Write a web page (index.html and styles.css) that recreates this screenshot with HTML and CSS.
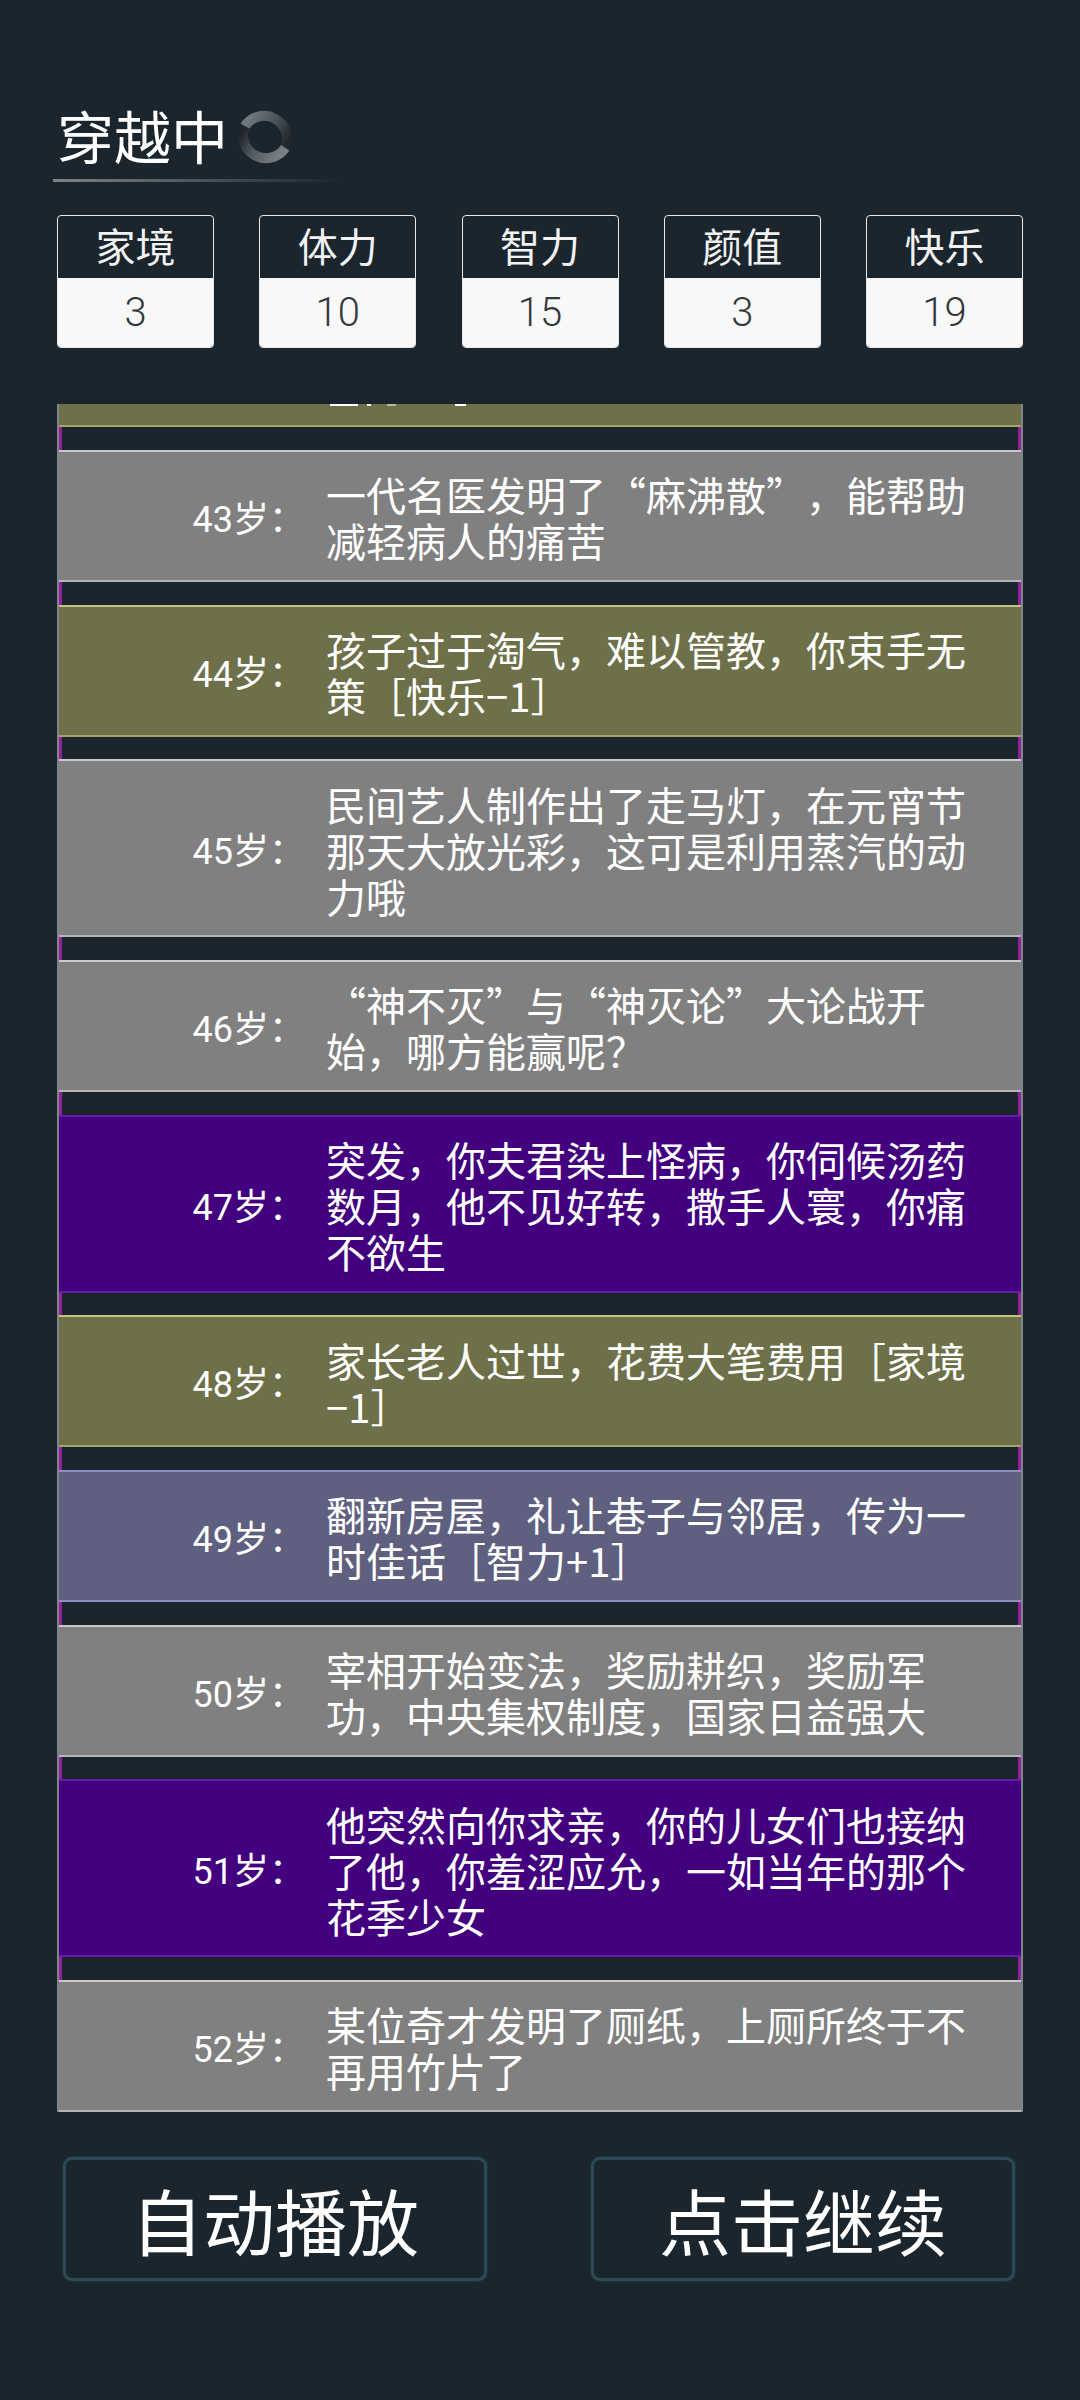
FILE: index.html
```html
<!DOCTYPE html>
<html lang="zh-CN">
<head>
<meta charset="utf-8">
<title>穿越中</title>
<link rel="stylesheet" href="styles.css">
</head>
<body>
<main class="page">
  <header class="title-bar">
    <h1 class="title">穿越中</h1>
    <svg class="spinner" viewBox="0 0 60 60" aria-hidden="true">
      <defs>
        <linearGradient id="arc-a" gradientUnits="userSpaceOnUse" x1="10" y1="19" x2="50" y2="41"><stop offset="0" stop-color="#6f777b"/><stop offset="0.55" stop-color="#4a5257"/><stop offset="1" stop-color="#1f262b"/></linearGradient>
        <linearGradient id="arc-b" gradientUnits="userSpaceOnUse" x1="50" y1="41" x2="10" y2="19"><stop offset="0" stop-color="#7b8084"/><stop offset="0.55" stop-color="#565c60"/><stop offset="1" stop-color="#1d2329"/></linearGradient>
      </defs>
      <path d="M9.8 19.2 A23 23 0 0 1 50.2 40.8" fill="none" stroke="url(#arc-a)" stroke-width="10"/>
      <path d="M50.2 40.8 A23 23 0 0 1 9.8 19.2" fill="none" stroke="url(#arc-b)" stroke-width="10"/>
    </svg>
  </header>
  <div class="title-rule"></div>

  <section class="stats">
    <div class="stat"><div class="stat-name">家境</div><div class="stat-value">3</div></div>
    <div class="stat"><div class="stat-name">体力</div><div class="stat-value">10</div></div>
    <div class="stat"><div class="stat-name">智力</div><div class="stat-value">15</div></div>
    <div class="stat"><div class="stat-name">颜值</div><div class="stat-value">3</div></div>
    <div class="stat"><div class="stat-name">快乐</div><div class="stat-value">19</div></div>
  </section>

  <section class="log">
    <div class="rows">
      <div class="row olive clipped"></div>
      <div class="row gray"><span class="age">43岁：</span><p class="text">一代名医发明了“麻沸散”，能帮助减轻病人的痛苦</p></div>
      <div class="row olive"><span class="age">44岁：</span><p class="text">孩子过于淘气，难以管教，你束手无策［快乐−1］</p></div>
      <div class="row gray"><span class="age">45岁：</span><p class="text">民间艺人制作出了走马灯，在元宵节那天大放光彩，这可是利用蒸汽的动力哦</p></div>
      <div class="row gray"><span class="age">46岁：</span><p class="text">“神不灭”与“神灭论”大论战开始，哪方能赢呢？</p></div>
      <div class="row purple"><span class="age">47岁：</span><p class="text">突发，你夫君染上怪病，你伺候汤药数月，他不见好转，撒手人寰，你痛不欲生</p></div>
      <div class="row olive"><span class="age">48岁：</span><p class="text">家长老人过世，花费大笔费用［家境−1］</p></div>
      <div class="row slate"><span class="age">49岁：</span><p class="text">翻新房屋，礼让巷子与邻居，传为一时佳话［智力+1］</p></div>
      <div class="row gray"><span class="age">50岁：</span><p class="text">宰相开始变法，奖励耕织，奖励军功，中央集权制度，国家日益强大</p></div>
      <div class="row purple"><span class="age">51岁：</span><p class="text">他突然向你求亲，你的儿女们也接纳了他，你羞涩应允，一如当年的那个花季少女</p></div>
      <div class="row gray"><span class="age">52岁：</span><p class="text">某位奇才发明了厕纸，上厕所终于不再用竹片了</p></div>
    </div>
  </section>

  <footer class="actions">
    <button class="action">自动播放</button>
    <button class="action">点击继续</button>
  </footer>
</main>
</body>
</html>
```

FILE: styles.css
```css
* { box-sizing: border-box; }
html, body { margin: 0; padding: 0; }
body {
  width: 1080px;
  height: 2400px;
  background: #1a252e;
  color: #fff;
  font-family: "Noto Sans CJK SC", "Roboto", sans-serif;
  text-spacing-trim: space-all;
  overflow: hidden;
}
.page { display: flex; flex-direction: column; height: 2400px; padding: 97px 57px 0; }
.title-bar { display: flex; align-items: flex-start; gap: 7px; height: 74px; }
.title { margin: 0; font-size: 57px; font-weight: 400; line-height: 74px; color: #fff; }
.spinner { width: 60px; height: 60px; flex: none; margin-top: 10px; }
.title-rule {
  height: 3px;
  width: 290px;
  margin: 8px 0 0 -4px;
  background: linear-gradient(90deg, #7d8488, #1a252e);
}
.stats { display: flex; justify-content: space-between; margin-top: 33px; }
.stat {
  width: 157px;
  height: 133px;
  border: 1px solid #e8e8e8;
  border-radius: 4px;
  overflow: hidden;
  display: flex;
  flex-direction: column;
}
.stat-name { flex: none; height: 62px; line-height: 58px; text-align: center; font-size: 40px; font-weight: 400; color: #f2f2f2; }
.stat-value {
  flex: 1;
  background: #f8f8f8;
  color: #33383c;
  text-align: center;
  font-family: "Roboto", sans-serif;
  font-weight: 300;
  font-size: 40px;
  line-height: 70px;
}
.log {
  margin-top: 56px;
  height: 1708px;
  overflow: hidden;
  border-left: 2px solid #7f8589;
  border-right: 2px solid #7f8589;
}
.rows { display: flex; flex-direction: column; gap: 22.67px; }
.row {
  position: relative;
  display: flex;
  align-items: center;
  padding: 19.5px 53px 16.5px 0;
  border-top: 2px solid #c9c9c9;
  border-bottom: 2px solid #b5b5b5;
}
.row::after {
  content: "";
  position: absolute;
  left: 0;
  right: 0;
  top: 100%;
  height: 22.67px;
  margin-top: 2px;
  border-left: 3px solid #96209c;
  border-right: 3px solid #96209c;
}
.row:last-child::after { display: none; }
.gray { background: #808080; }
.olive { background: #6d7048; border-top-color: #c3c67f; border-bottom-color: #a3a66a; }
.purple { background: #42007f; border-top-color: #6a1bb0; border-bottom-color: #6a1bb0; }
.slate { background: #5f5f80; border-top-color: #8f8fc0; border-bottom-color: #8f8fc0; }
.clipped { height: 23.33px; padding: 0; border-top: 0; }
.clipped::before {
  content: "";
  position: absolute;
  left: 271px;
  top: 0;
  width: 137px;
  height: 2px;
  background: linear-gradient(90deg, #fff 0 28px, transparent 28px 37px, #fff 37px 41px, transparent 41px 57px, rgba(255,255,255,.5) 57px 66px, transparent 66px 125px, #fff 125px 136px, transparent 136px);
}
.age {
  flex: none;
  width: 246px;
  margin-right: 21px;
  margin-top: -3px;
  text-align: right;
  font-family: "Roboto", "Noto Sans CJK SC", sans-serif;
  font-size: 36px;
  font-weight: 400;
  color: #fff;
}
.text {
  margin: 0;
  flex: 1;
  font-size: 40px;
  font-weight: 400;
  line-height: 46px;
  color: #fff;
}
.actions { display: flex; justify-content: space-between; padding: 0 8px 0 6px; margin-top: 45px; }
.action {
  width: 424px;
  height: 124px;
  background: transparent;
  border: 3px solid #2c4a55;
  border-radius: 9px;
  box-shadow: 0 0 2px #2a5a50;
  color: #fff;
  font-family: "Noto Sans CJK SC", sans-serif;
  font-weight: 400;
  font-size: 72px;
  line-height: 1;
  padding: 0;
}
```
